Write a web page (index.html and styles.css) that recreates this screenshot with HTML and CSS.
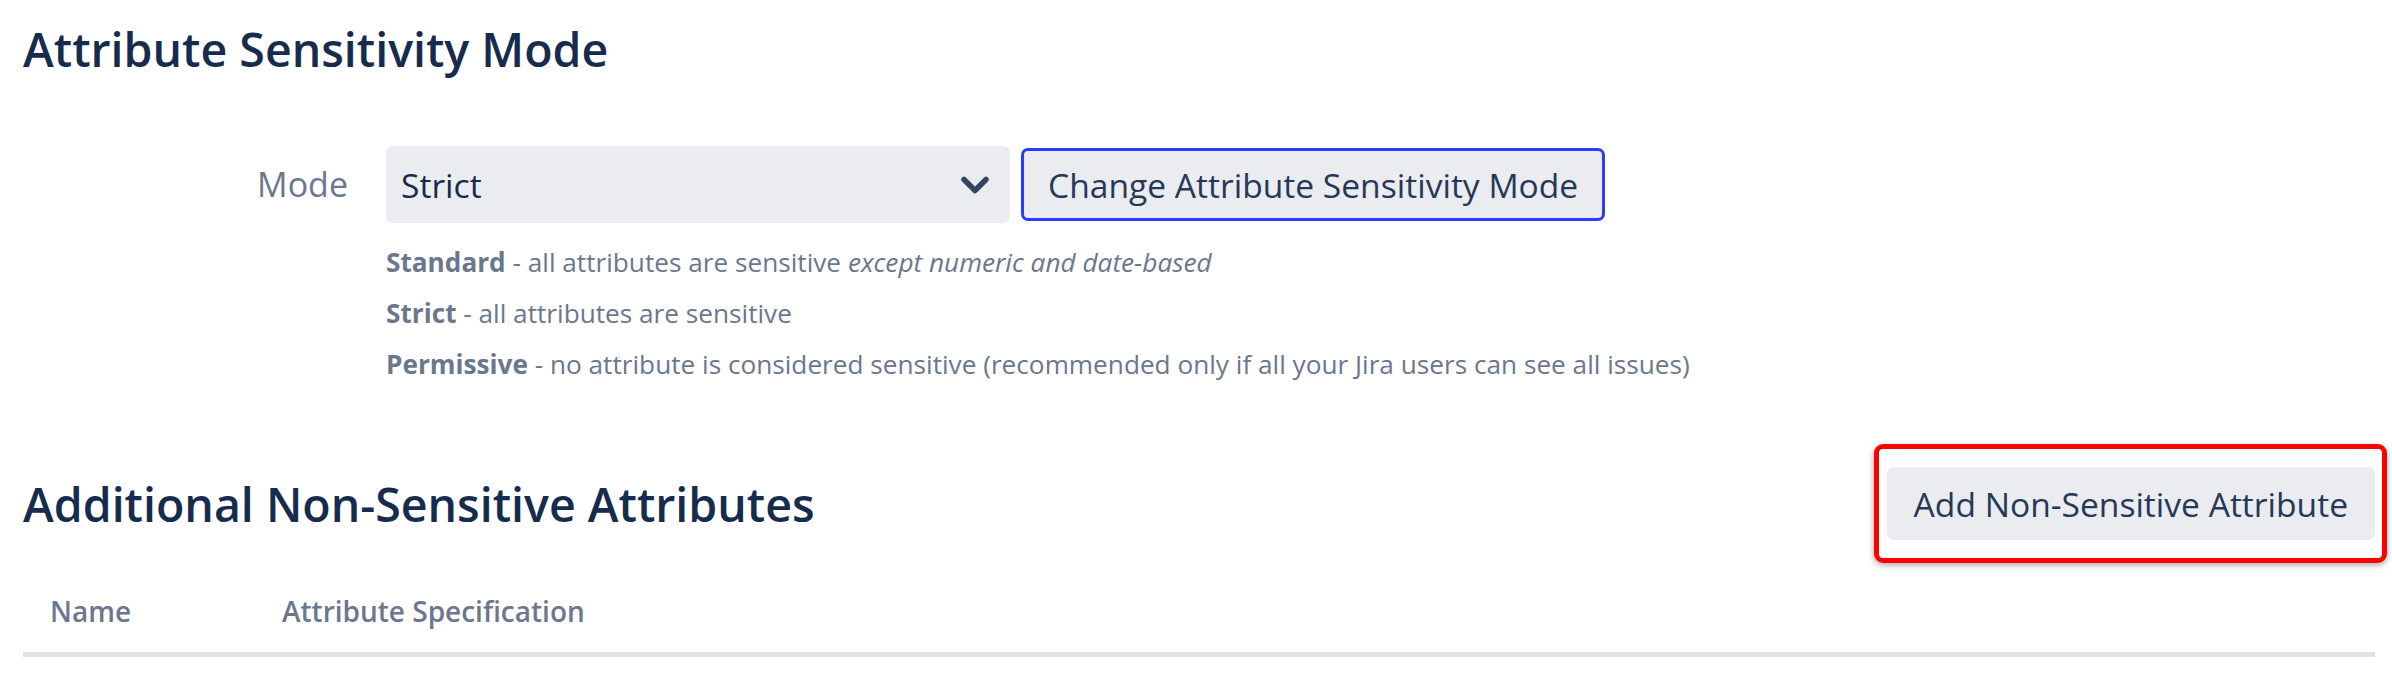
FILE: index.html
```html
<!DOCTYPE html>
<html lang="en">
<head>
<meta charset="utf-8">
<title>Attribute Sensitivity Mode</title>
<link rel="stylesheet" href="styles.css">
</head>
<body>
<main class="page">
  <section class="mode-section">
    <h1 class="heading">Attribute Sensitivity Mode</h1>
    <div class="form-row">
      <label class="field-label" for="mode">Mode</label>
      <div class="field">
        <div class="field-controls">
          <div class="select" id="mode">
            <span class="select-value">Strict</span>
            <svg class="chevron" viewBox="0 0 30 30" width="30" height="30" aria-hidden="true">
              <path d="M4 9.5 L15 20.5 L26 9.5" fill="none" stroke="#344563" stroke-width="5.5" stroke-linecap="round" stroke-linejoin="round"/>
            </svg>
          </div>
          <button class="btn btn-focused" type="button">Change Attribute Sensitivity Mode</button>
        </div>
        <div class="help">
          <p class="help-line"><b>Standard</b> - all attributes are sensitive <i>except numeric and date-based</i></p>
          <p class="help-line"><b>Strict</b> - all attributes are sensitive</p>
          <p class="help-line"><b>Permissive</b> - no attribute is considered sensitive (recommended only if all your Jira users can see all issues)</p>
        </div>
      </div>
    </div>
  </section>

  <section class="attr-section">
    <div class="section-header">
      <h2 class="heading">Additional Non-Sensitive Attributes</h2>
      <div class="highlight">
        <button class="btn" type="button">Add Non-Sensitive Attribute</button>
      </div>
    </div>
    <div class="table-head">
      <div class="th th-name">Name</div>
      <div class="th">Attribute Specification</div>
    </div>
  </section>
</main>
</body>
</html>
```

FILE: styles.css
```css
* { box-sizing: border-box; }

html, body {
  margin: 0;
  padding: 0;
  background: #ffffff;
}

body {
  font-family: "Open Sans", "Noto Sans", "Liberation Sans", sans-serif;
  color: #172B4D;
}

.page {
  padding: 20px 17px 0 23px;
}

.heading {
  margin: 0;
  font-size: 46.5px;
  line-height: 58px;
  font-weight: 600;
  color: #172B4D;
}

.form-row {
  display: flex;
  margin-top: 68px;
}

.field-label {
  width: 325px;
  flex: none;
  margin-right: 38px;
  text-align: right;
  font-size: 34px;
  line-height: 77px;
  color: #6B778C;
}

.field-controls {
  display: flex;
  align-items: center;
  gap: 11px;
}

.select {
  width: 624px;
  height: 77px;
  background: #EBECF0;
  border-radius: 7px;
  display: flex;
  align-items: center;
  justify-content: space-between;
  padding: 0 20px 0 15px;
}

.select-value {
  font-size: 33.6px;
  color: #172B4D;
}

.chevron { display: block; }

.btn {
  font-family: inherit;
  font-size: 33.6px;
  color: #253858;
  background: #EBECF0;
  border: 3px solid transparent;
  border-radius: 7px;
  height: 73px;
  padding: 0 24px;
  cursor: pointer;
}

.btn-focused {
  border-color: #2B3CFF;
}

.help {
  margin-top: 14px;
}

.help-line {
  margin: 0;
  font-size: 26.2px;
  line-height: 51px;
  color: #6B778C;
}

.help-line b { font-weight: 700; }

.attr-section {
  margin-top: 54px;
}

.section-header {
  display: flex;
  align-items: center;
  justify-content: space-between;
}

.highlight {
  border: 5px solid #FF0000;
  border-radius: 9px;
  padding: 18px 7px 18px 8px;
  margin-right: -12px;
  box-shadow: 0 2px 6px rgba(0, 0, 0, 0.35);
}

.table-head {
  display: grid;
  grid-template-columns: 232px 1fr;
  padding: 30px 0 23px;
  border-bottom: 5px solid #DFE1E6;
}

.th {
  padding-left: 27px;
  font-size: 28px;
  line-height: 36px;
  font-weight: 600;
  color: #6B778C;
}
```
